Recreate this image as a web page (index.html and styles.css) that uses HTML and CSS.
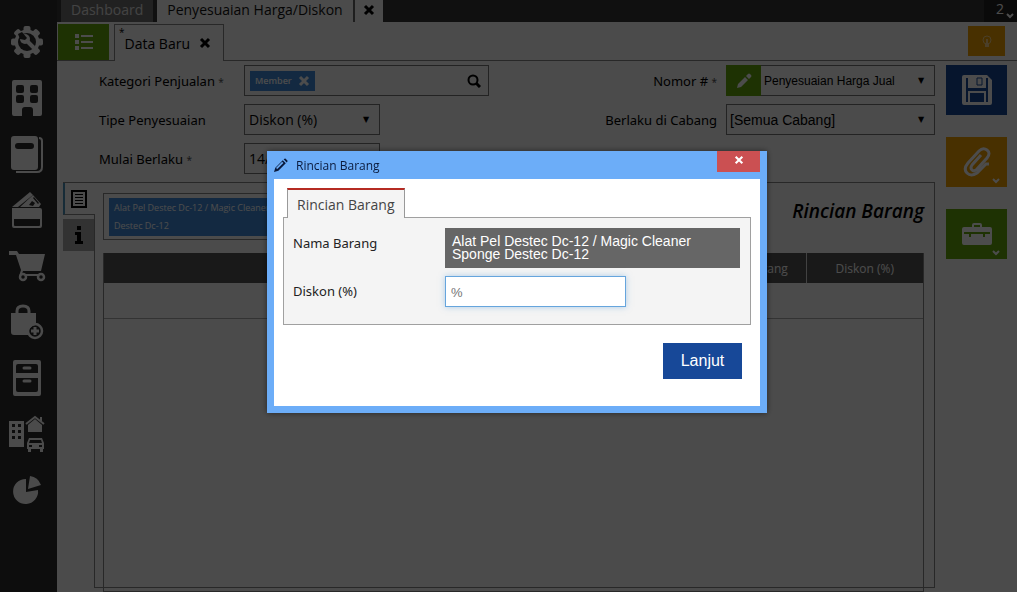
FILE: index.html
```html
<!DOCTYPE html>
<html lang="id">
<head>
    <meta charset="UTF-8">
    <meta name="viewport" content="width=device-width, initial-scale=1.0">
    <title>Penyesuaian Harga/Diskon</title>
    <link rel="stylesheet" href="styles.css">
</head>
<body>
    <nav class="sidebar">
        <a href="#" aria-label="Pengaturan">
            <svg width="34" height="34" viewBox="0 0 34 34"><g fill="currentColor"><circle cx="17" cy="17" r="12.5"/><g id="teeth"><rect x="13.5" y="1" width="7" height="32" rx="2"/><rect x="1" y="13.500" width="32" height="7" rx="2"/></g><use href="#teeth" transform="rotate(45 17 17)"/></g><circle cx="17" cy="17" r="9" fill="#2c2c2c"/><path d="M16 15l7 7" stroke="currentColor" stroke-width="4" stroke-linecap="round"/><circle cx="15" cy="14" r="5" fill="currentColor"/><path d="M8 9l4-2 5 6-2 2-5-1z" fill="#2c2c2c"/></svg>
        </a>
        <a href="#" aria-label="Perusahaan">
            <svg width="34" height="38" viewBox="0 0 34 38"><path fill="currentColor" fill-rule="evenodd" d="M4 1h26q2 0 2 2v32q0 2-2 2h-7v-6q0-3-3-3h-5q-3 0-3 3v6H4q-2 0-2-2V3q0-2 2-2zM8 6q-2 0-2 2v4q0 2 2 2h4q2 0 2-2V8q0-2-2-2zM22 6q-2 0-2 2v4q0 2 2 2h4q2 0 2-2V8q0-2-2-2zM8 16q-2 0-2 2v4q0 2 2 2h4q2 0 2-2v-4q0-2-2-2zM22 16q-2 0-2 2v4q0 2 2 2h4q2 0 2-2v-4q0-2-2-2z"/></svg>
        </a>
        <a href="#" aria-label="Buku Besar">
            <svg width="34" height="38" viewBox="0 0 34 38"><path fill="currentColor" fill-rule="evenodd" d="M4 1h21q3 0 3 3v28q0 3-3 3H4q-3 0-3-3V4q0-3 3-3zM8 8q-3 0-3 3t3 3h13q3 0 3-3t-3-3z"/><path d="M29 3q3 0 3 3v26q0 5-5 5H6" fill="none" stroke="currentColor" stroke-width="2"/></svg>
        </a>
        <a href="#" aria-label="Kas Bank">
            <svg width="34" height="38" viewBox="0 0 34 38"><path fill="currentColor" fill-rule="evenodd" d="M2 17h28q2 0 2 2v16q0 2-2 2H4q-2 0-2-2zM4 28v6q0 1 1 1h24q1 0 1-1v-6z"/><path fill="currentColor" d="M2 16L20 1l3 3L8 16z"/><path fill="currentColor" fill-rule="evenodd" d="M10 16L23 4l8 9-2 3zM19 14l4 1 2-3-3-2zM23 7l5 6 1-1-5-6z"/></svg>
        </a>
        <a href="#" aria-label="Penjualan">
            <svg width="38" height="32" viewBox="0 0 38 32"><path fill="currentColor" d="M1 1h8l2 3h26l-4 17H15l-1 3h19v2H11l2-6L8 5H1z"/><g fill="#2c2c2c" stroke="currentColor" stroke-width="2.500"><circle cx="15" cy="27" r="3"/><circle cx="33" cy="27" r="3"/></g></svg>
        </a>
        <a href="#" aria-label="Pembelian">
            <svg width="34" height="36" viewBox="0 0 34 36"><path fill="currentColor" d="M1 9h25v12a9 9 0 0 0-8 10H4q-3 0-3-3z"/><path d="M7 11V7q0-5 6-5t6 5v4" fill="none" stroke="currentColor" stroke-width="3"/><circle cx="25" cy="27" r="7" fill="none" stroke="currentColor" stroke-width="2.500"/><path d="M25 23v8M21 27h8" stroke="currentColor" stroke-width="3"/></svg>
        </a>
        <a href="#" aria-label="Persediaan">
            <svg width="30" height="36" viewBox="0 0 30 36"><path fill="currentColor" fill-rule="evenodd" d="M3 0h24q2 0 2 2v32q0 2-2 2H3q-2 0-2-2V2q0-2 2-2zM6 4q-2 0-2 2v7h22V6q0-2-2-2zM4 18v12q0 2 2 2h18q2 0 2-2V18z"/><path d="M12 8h6M12 21h6" stroke="currentColor" stroke-width="3" stroke-linecap="round"/></svg>
        </a>
        <a href="#" aria-label="Aset Tetap">
            <svg width="38" height="38" viewBox="0 0 38 38"><path fill="currentColor" fill-rule="evenodd" d="M1 6h15v26H1zM4 9v3h3V9zM10 9v3h3V9zM4 15v3h3v-3zM10 15v3h3v-3zM4 21v3h3v-3zM10 21v3h3v-3z"/><path fill="currentColor" d="M21 9l6-5 7 6v7H20v-7z"/><path d="M18 9l9-7 9 7M33 2v4" fill="none" stroke="currentColor" stroke-width="2"/><path fill="currentColor" fill-rule="evenodd" d="M21 23h13l2 5v6h-1v3h-3v-3h-9v3h-3v-3h-1v-6zM22 25l-1 3h13l-1-3zM21 30v2h3v-2zM31 30v2h3v-2z"/></svg>
        </a>
        <a href="#" aria-label="Laporan">
            <svg width="30" height="30" viewBox="0 0 30 30"><path fill="currentColor" d="M14 4v13l12-2A12.500 12.500 0 1 1 14 4z"/><path fill="currentColor" d="M18 1q8 1 11 9l-13 4z"/></svg>
        </a>
    </nav>

    <div class="page">
        <header class="topbar">
            <a class="top-tab" href="#">Dashboard</a>
            <a class="top-tab active" href="#">Penyesuaian Harga/Diskon</a>
            <button class="top-close" aria-label="Tutup"><svg width="12" height="12" viewBox="0 0 12 12"><path d="M2 2l8 8M10 2l-8 8" stroke="currentColor" stroke-width="3"/></svg></button>
            <button class="user">2 <svg width="8" height="6" viewBox="0 0 8 6"><path d="M1 1l3 3 3-3" fill="none" stroke="currentColor" stroke-width="2"/></svg></button>
        </header>

        <div class="subbar">
            <button class="list-btn" aria-label="Daftar"><svg width="20" height="18" viewBox="0 0 20 18"><g fill="none" stroke="currentColor" stroke-width="2"><path d="M7 3h12M7 9h12M7 15h12"/><path d="M1 3h4M1 9h4M1 15h4" stroke-width="4"/></g></svg></button>
            <a class="data-tab" href="#"><sup>*</sup>Data Baru <svg width="12" height="12" viewBox="0 0 12 12"><path d="M2 2l8 8M10 2l-8 8" stroke="currentColor" stroke-width="3"/></svg></a>
            <button class="tip-btn" aria-label="Bantuan"><svg width="10" height="13" viewBox="0 0 10 13"><circle cx="5" cy="5" r="4" fill="none" stroke="currentColor" stroke-width="1"/><path d="M3 9h4v3H3zM4 4h2v5H4z" fill="currentColor"/></svg></button>
        </div>

        <div class="workspace">
            <main>
                <form class="form">
                    <div class="column">
                        <div class="row">
                            <label for="kategori">Kategori Penjualan <small>*</small></label>
                            <div class="field search">
                                <span class="chip">Member <svg width="12" height="12" viewBox="0 0 12 12"><path d="M2 2l8 8M10 2l-8 8" stroke="currentColor" stroke-width="3"/></svg></span>
                                <input type="text" id="kategori">
                                <svg width="14" height="14" viewBox="0 0 14 14" fill="none" stroke="currentColor"><circle cx="6" cy="6" r="4.500" stroke-width="2"/><path d="M9 9l4 4" stroke-width="3"/></svg>
                            </div>
                        </div>
                        <div class="row">
                            <label for="tipe">Tipe Penyesuaian</label>
                            <div class="field select short">
                                <select id="tipe"><option>Diskon (%)</option></select>
                            </div>
                        </div>
                        <div class="row">
                            <label for="mulai">Mulai Berlaku <small>*</small></label>
                            <div class="field short"><input type="text" id="mulai" value="14/"></div>
                        </div>
                    </div>
                    <div class="column right">
                        <div class="row">
                            <label for="nomor">Nomor # <small>*</small></label>
                            <div class="field select small">
                                <button type="button" class="edit-btn" aria-label="Ubah nomor"><svg width="16" height="16" viewBox="0 0 16 16"><path d="M1 15l1-4 7-7 3 3-7 7zM10 3l2-2q1-1 2 0l1 1q1 1 0 2l-2 2z" fill="currentColor"/></svg></button>
                                <select id="nomor"><option>Penyesuaian Harga Jual</option></select>
                            </div>
                        </div>
                        <div class="row">
                            <label for="cabang">Berlaku di Cabang</label>
                            <div class="field select">
                                <select id="cabang"><option>[Semua Cabang]</option></select>
                            </div>
                        </div>
                    </div>
                </form>

                <section class="details">
                    <div class="side-tabs">
                        <button class="active" aria-label="Rincian"><svg width="16" height="18" viewBox="0 0 16 18" fill="none" stroke="currentColor"><path d="M1 1h14v16H1z" stroke-width="2"/><path d="M4 4.500h8M4 7.500h8M4 10.500h8M4 13.500h8"/></svg></button>
                        <button aria-label="Info"><svg width="10" height="18" viewBox="0 0 10 18"><path d="M3 0h4v4H3zM1 6h6v9h2v3H1v-3h2V9H1z" fill="currentColor"/></svg></button>
                    </div>
                    <div class="panel">
                        <div class="panel-head">
                            <div class="item-box"><span class="item-chip">Alat Pel Destec Dc-12 / Magic Cleaner Sponge Destec Dc-12</span></div>
                            <h2>Rincian Barang</h2>
                        </div>
                        <div class="table-wrap">
                            <table>
                                <thead>
                                    <tr><th>Nama Barang</th><th class="code">Kode Barang</th><th class="disc">Diskon (%)</th></tr>
                                </thead>
                                <tbody>
                                    <tr><td colspan="3"></td></tr>
                                </tbody>
                            </table>
                        </div>
                    </div>
                </section>
            </main>

            <div class="actions">
                <button class="save" aria-label="Simpan"><svg width="30" height="30" viewBox="0 0 30 30"><path fill="currentColor" fill-rule="evenodd" d="M2 0h23l5 5v23q0 2-2 2H2q-2 0-2-2V2q0-2 2-2zM4 3v24h2V16h18v11h2V3h-2v10H6V3z"/><path d="M15 3h5v7h-5z" fill="none" stroke="#174898" stroke-width="1"/><path d="M8 18h14v9H8z" fill="#174898"/></svg></button>
                <button class="attach" aria-label="Lampiran"><svg width="28" height="32" viewBox="0 0 28 32"><path d="M18 9L9 19q-2 3 0 5t5-1l10-11q4-5 0-8t-8 1L5 17q-5 6-1 10t10 0l9-9h3" fill="none" stroke="currentColor" stroke-width="3"/></svg><svg class="more" width="8" height="6" viewBox="0 0 8 6"><path d="M1 1l3 3 3-3" fill="none" stroke="currentColor" stroke-width="2"/></svg></button>
                <button class="tools" aria-label="Alat"><svg width="32" height="24" viewBox="0 0 32 24"><path fill="currentColor" fill-rule="evenodd" d="M3 5h8V3q0-2 2-2h6q2 0 2 2v2h8q2 0 2 2v14q0 2-2 2H3q-2 0-2-2V7q0-2 2-2zM13 5h6V3h-6z"/><path d="M3 11h26M9 10v5M23 10v5" stroke="#64a80c" stroke-width="2"/></svg><svg class="more" width="8" height="6" viewBox="0 0 8 6"><path d="M1 1l3 3 3-3" fill="none" stroke="currentColor" stroke-width="2"/></svg></button>
            </div>
        </div>
    </div>

    <div class="overlay">
        <div class="dialog" role="dialog" aria-labelledby="dialog-title">
            <div class="dialog-head">
                <svg width="14" height="14" viewBox="0 0 16 16"><path d="M0 16l1.500-5L10 2.500l3.500 3.500L5 14.500zM11 1.500q1-1 2-1l2.500 2.500q0 1-1 2z" fill="currentColor"/><path d="M3 12l7-7" stroke="#6cadf8" stroke-width="2"/></svg>
                <span id="dialog-title">Rincian Barang</span>
                <button class="dialog-close" aria-label="Tutup"><svg width="10" height="10" viewBox="0 0 12 12"><path d="M2 2l8 8M10 2l-8 8" stroke="currentColor" stroke-width="2.500"/></svg></button>
            </div>
            <div class="dialog-body">
                <a class="dialog-tab" href="#">Rincian Barang</a>
                <div class="dialog-box">
                    <span>Nama Barang</span>
                    <div class="item-name">Alat Pel Destec Dc-12 / Magic Cleaner Sponge Destec Dc-12</div>
                    <label for="diskon">Diskon (%)</label>
                    <input type="text" id="diskon" placeholder="%">
                </div>
                <button class="next">Lanjut</button>
            </div>
        </div>
    </div>
</body>
</html>
```
FILE: styles.css
```css
* {
    box-sizing: border-box;
}
body {
    margin: 0;
    height: 100vh;
    display: flex;
    overflow: hidden;
    background-color: #fafafa;
    color: #000;
    font-family: "Open Sans", "Segoe UI", sans-serif;
    font-size: 13px;
}
a {
    color: inherit;
    text-decoration: none;
}
button {
    display: flex;
    align-items: center;
    justify-content: center;
    padding: 0;
    border: none;
    color: #fff;
    font: inherit;
    cursor: pointer;
}
svg {
    flex-shrink: 0;
}

/* Sidebar */
.sidebar {
    width: 57px;
    flex-shrink: 0;
    padding: 14px 3px 0 0;
    background-color: #2c2c2c;
    color: #fafafa;
}
.sidebar a {
    display: flex;
    align-items: center;
    justify-content: center;
    height: 56px;
}

/* Top bars */
.page {
    flex: 1;
    min-width: 0;
    display: flex;
    flex-direction: column;
}
.topbar {
    display: flex;
    height: 22px;
    padding-left: 4px;
    background-color: #383838;
    font-size: 14px;
    line-height: 20px;
}
.top-tab {
    padding: 0 10px;
    margin-right: 4px;
    background-color: #707070;
    color: #e0e0e0;
}
.top-tab.active {
    margin-right: 0;
    background-color: #fafafa;
    color: #111;
}
.top-close {
    width: 30px;
    background-color: #fafafa;
    border-left: 2px solid #666;
    color: #000;
}
.top-close svg {
    margin-bottom: 2px;
}
.user {
    gap: 2px;
    margin-left: auto;
    padding-left: 9px;
    width: 33px;
    background-color: #222;
    line-height: 18px;
    align-items: flex-start;
}
.user svg {
    align-self: flex-end;
    margin-bottom: 3px;
}
.subbar {
    display: flex;
    align-items: flex-end;
    height: 39px;
    padding: 2px 12px 0 1px;
    border-bottom: 1px solid #888;
}
.list-btn {
    width: 51px;
    height: 36px;
    background-color: #64a80c;
}
.data-tab {
    display: flex;
    align-items: center;
    gap: 9px;
    height: 37px;
    margin: 0 0 -1px 5px;
    padding: 0 12px 0 4px;
    border: 1px solid #888;
    border-bottom: none;
    background-color: #fafafa;
    font-size: 14px;
}
.data-tab sup {
    align-self: flex-start;
    margin-right: -9px;
    font-size: 10px;
}
.tip-btn {
    width: 37px;
    height: 30px;
    margin: 0 0 4px auto;
    background-color: #f0a000;
    color: #fad48a;
}

/* Form */
.workspace {
    flex: 1;
    min-height: 0;
    display: flex;
    gap: 11px;
    padding: 4px 10px 4px 6px;
}
main {
    flex: 1;
    min-width: 0;
    display: flex;
    flex-direction: column;
}
.form {
    display: flex;
    justify-content: space-between;
    padding-left: 36px;
    margin-bottom: 8px;
}
.column {
    display: flex;
    flex-direction: column;
    gap: 8px;
}
.row {
    display: flex;
    align-items: center;
    gap: 9px;
}
.row label {
    width: 136px;
    font-family: "Noto Sans", sans-serif;
}
.row small {
    font-size: 10px;
    color: #555;
}
.right label {
    text-align: right;
}
.field {
    display: flex;
    align-items: center;
    width: 209px;
    height: 31px;
    border: 1px solid #777;
}
.field.search {
    width: 245px;
    padding: 0 7px 0 5px;
}
.field.short {
    width: 136px;
}
.field input, .field select {
    flex: 1;
    min-width: 0;
    width: 100%;
    height: 100%;
    padding: 0 4px;
    border: none;
    background: none;
    appearance: none;
    color: #000;
    font-family: inherit;
    font-size: 14px;
}
.right select {
    padding: 0 3px;
    font-family: "Liberation Sans", Arial, sans-serif;
    font-size: 14px;
}
.field.small select {
    font-size: 12px;
}
.field.select::after {
    content: "▼";
    width: 16px;
    font-family: "DejaVu Sans", sans-serif;
    font-size: 8px;
}
.chip {
    display: flex;
    align-items: center;
    gap: 6px;
    height: 20px;
    padding: 0 5px;
    background-color: #428bda;
    color: #fff;
    font-size: 9px;
    font-weight: 600;
    line-height: 24px;
}
.edit-btn {
    width: 35px;
    height: 31px;
    margin-left: -1px;
    background-color: #64a80c;
}

/* Details panel */
.details {
    flex: 1;
    display: flex;
    min-height: 0;
}
.side-tabs {
    width: 31px;
    border-top: 1px solid #888;
    z-index: 1;
}
.side-tabs button {
    width: 31px;
    height: 32px;
    background-color: #a8a8a8;
    color: #000;
}
.side-tabs .active {
    width: 32px;
    margin-bottom: 4px;
    padding-right: 2px;
    background-color: #fafafa;
    border-left: 2px solid #4a90b8;
    border-bottom: 1px solid #888;
}
.panel {
    flex: 1;
    display: flex;
    flex-direction: column;
    padding: 10px 10px 0 8px;
    border: 1px solid #888;
}
.panel-head {
    display: flex;
    justify-content: space-between;
}
.panel h2 {
    margin: 6px 0 0;
    font-size: 19px;
    line-height: 24px;
    font-weight: 600;
    font-style: italic;
}
.item-box {
    width: 245px;
    height: 47px;
    padding: 4px 32px 4px 5px;
    border: 1px solid #888;
}
.item-chip {
    display: block;
    padding: 1px 5px;
    background-color: #428bda;
    color: #fff;
    font-size: 9px;
    line-height: 18px;
}
.table-wrap {
    flex: 1;
    margin: 13px 0 -5px;
    border: 1px solid #888;
    border-top: none;
}
table {
    width: 100%;
    border-collapse: collapse;
}
th {
    height: 30px;
    padding: 0;
    background-color: #555;
    color: #fff;
    font-size: 12px;
    font-weight: normal;
}
th + th {
    border-left: 1px solid #ddd;
}
.code {
    width: 108px;
}
.disc {
    width: 117px;
}
td {
    height: 35px;
    border-bottom: 1px solid #aaa;
}

/* Action buttons */
.actions {
    display: flex;
    flex-direction: column;
    gap: 22px;
}
.actions button {
    position: relative;
    width: 61px;
    height: 50px;
}
.actions .save {
    background-color: #174898;
}
.actions .attach {
    background-color: #f0a000;
}
.actions .tools {
    background-color: #64a80c;
}
.more {
    position: absolute;
    right: 7px;
    bottom: 3px;
}

/* Dialog */
.overlay {
    position: fixed;
    inset: 0;
    z-index: 10;
    display: flex;
    align-items: flex-start;
    justify-content: center;
    padding: 151px 0 0 17px;
    background-color: rgba(0, 0, 0, 0.7);
}
.dialog {
    width: 500px;
    padding: 0 7px 7px;
    background-color: #6cadf8;
    box-shadow: 0 0 6px rgba(0, 0, 0, 0.5);
}
.dialog-head {
    display: flex;
    align-items: center;
    gap: 8px;
    height: 28px;
    color: #0a1a3c;
    font-size: 12px;
}
.dialog-close {
    align-self: flex-start;
    width: 43px;
    height: 21px;
    padding-bottom: 3px;
    margin-left: auto;
    background-color: #cb5052;
}
.dialog-body {
    display: flex;
    flex-direction: column;
    align-items: flex-start;
    padding: 9px 9px 27px;
    background-color: #fff;
}
.dialog-tab {
    z-index: 1;
    height: 30px;
    margin: 0 0 -1px 4px;
    padding: 0 9px;
    border: 1px solid #999;
    border-top: 2px solid #b52b23;
    border-bottom: none;
    background-color: #f4f4f4;
    color: #444;
    font-size: 14px;
    line-height: 30px;
}
.dialog-box {
    display: grid;
    grid-template-columns: 143px 1fr;
    gap: 8px 9px;
    align-self: stretch;
    padding: 10px 10px 17px 9px;
    border: 1px solid #a0a0a0;
    background-color: #f4f4f4;
    color: #222;
    font-family: "Noto Sans", sans-serif;
    font-size: 13px;
    line-height: 31px;
}
.item-name {
    padding: 7px;
    background-color: #666;
    color: #fff;
    font-family: "Liberation Sans", Arial, sans-serif;
    font-size: 14px;
    line-height: 13px;
}
.dialog-box input {
    width: 181px;
    height: 31px;
    padding: 2px 5px 0;
    border: 1px solid #66a5dd;
    box-shadow: 0 0 6px rgba(102, 165, 221, 0.5);
    font-family: "Liberation Sans", Arial, sans-serif;
    font-size: 13px;
}
.next {
    align-self: flex-end;
    width: 79px;
    height: 36px;
    margin: 18px 9px 0 0;
    background-color: #174898;
    font-family: "Liberation Sans", Arial, sans-serif;
    font-size: 16px;
}
```
